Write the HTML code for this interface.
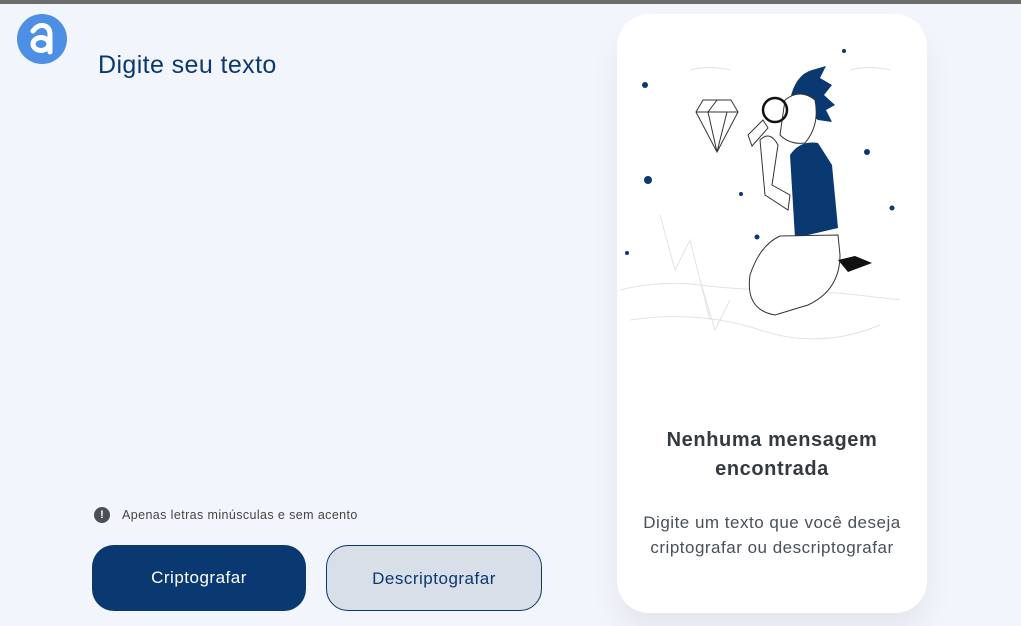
<!DOCTYPE html>
<html><head><meta charset="utf-8"><style>
*{margin:0;padding:0;box-sizing:border-box}
body{width:1021px;height:626px;overflow:hidden;background:#f3f5fc;font-family:"Liberation Sans",sans-serif;position:relative}
.bar{position:absolute;left:0;top:0;width:1021px;height:4px;background:#6b6b6b}
.logo{position:absolute;left:17px;top:14px;width:50px;height:50px;border-radius:50%;background:#4d8fe4}
h1{position:absolute;left:98px;top:51px;font-size:25px;letter-spacing:0.4px;font-weight:normal;color:#0a3871}
.warn{position:absolute;left:94px;top:507px;font-size:12.5px;letter-spacing:0.4px;color:#444;display:flex;align-items:center}
.warn i{display:inline-block;width:16px;height:16px;border-radius:50%;background:#495057;color:#fff;font-style:normal;font-weight:bold;font-size:11px;text-align:center;line-height:16px;margin-right:12px;letter-spacing:0}
.b1{position:absolute;left:92px;top:545px;width:214px;height:66px;border-radius:22px;background:#0a3871;color:#fff;font-size:17px;letter-spacing:0.5px;text-align:center;line-height:66px}
.b2{position:absolute;left:326px;top:545px;width:216px;height:66px;border-radius:22px;background:#d8dfe8;border:1px solid #0a3871;color:#0a3871;font-size:17px;letter-spacing:0.5px;text-align:center;line-height:66px}
.card{position:absolute;left:617px;top:14px;width:310px;height:599px;border-radius:32px;background:#fff;box-shadow:0 20px 30px rgba(0,0,0,0.06)}
.t{position:absolute;left:0;top:412px;width:310px;text-align:center;font-size:20px;letter-spacing:0.6px;font-weight:bold;color:#343a40;line-height:29px}
.p{position:absolute;left:0;top:496px;width:310px;text-align:center;font-size:17px;letter-spacing:0.5px;color:#495057;line-height:25px}
</style></head><body>
<div class="bar"></div>
<div class="logo"><svg width="50" height="50" viewBox="0 0 50 50"><path d="M16 17 Q20 11 26 11.5 Q33 12.5 33 21 V38" fill="none" stroke="#fff" stroke-width="5" stroke-linecap="round"/><ellipse cx="24" cy="30" rx="8" ry="6.5" fill="none" stroke="#fff" stroke-width="5"/></svg></div>
<h1>Digite seu texto</h1>
<div class="warn"><i>!</i>Apenas letras minúsculas e sem acento</div>
<div class="b1">Criptografar</div>
<div class="b2">Descriptografar</div>
<div class="card">
<svg width="310" height="340" viewBox="617 14 310 340" style="position:absolute;left:0;top:0">
<g fill="none" stroke="#e3e3e3" stroke-width="1">
<path d="M620 290 Q660 280 700 285 T780 290 T900 300"/>
<path d="M660 215 L675 270 L690 240 L710 320"/>
<path d="M630 320 Q700 310 760 330 T880 325"/>
<path d="M700 280 L715 330 L730 300"/>
<path d="M850 70 Q870 65 890 70"/><path d="M690 70 Q710 65 730 70"/>
</g>
<g fill="#0a3871"><circle cx="645" cy="85" r="3"/><circle cx="844" cy="51" r="2"/><circle cx="648" cy="180" r="4"/><circle cx="867" cy="152" r="3"/><circle cx="892" cy="208" r="2.5"/><circle cx="741" cy="194" r="2"/><circle cx="757" cy="237" r="2.5"/><circle cx="627" cy="253" r="2"/></g>
<path d="M696 112 L703 100 L731 100 L738 112 L717 152 Z M696 112 H738 M717 152 L708 112 L717 100 M717 152 L727 112" fill="none" stroke="#333" stroke-width="1"/>
<path d="M790 100 Q795 75 812 70 L826 66 L820 78 L832 85 L824 95 L835 105 L826 110 L832 122 L818 120 Z" fill="#0a3871"/>
<path d="M785 100 Q800 88 815 100 Q820 125 805 143 Q790 145 780 135 Z" fill="#fff" stroke="#333" stroke-width="1"/>
<path d="M790 155 Q800 140 818 143 L832 165 L838 228 L795 238 Z" fill="#0a3871"/>
<path d="M760 140 Q770 130 778 145 L772 185 L790 195 L788 210 L765 195 Z" fill="#fff" stroke="#333" stroke-width="1"/>
<path d="M748 135 L763 120 L768 128 L752 146 Z" fill="#fff" stroke="#333" stroke-width="1"/>
<circle cx="775" cy="110" r="12" fill="none" stroke="#111" stroke-width="2.5"/>
<path d="M780 236 Q760 245 750 275 Q745 310 775 315 L808 305 Q840 290 840 255 L838 235 Z" fill="#fff" stroke="#333" stroke-width="1"/>
<path d="M838 260 L855 256 L872 263 L848 272 Z" fill="#111"/>
</svg>
<div class="t">Nenhuma mensagem<br>encontrada</div>
<div class="p">Digite um texto que você deseja<br>criptografar ou descriptografar</div>
</div>
</body></html>
